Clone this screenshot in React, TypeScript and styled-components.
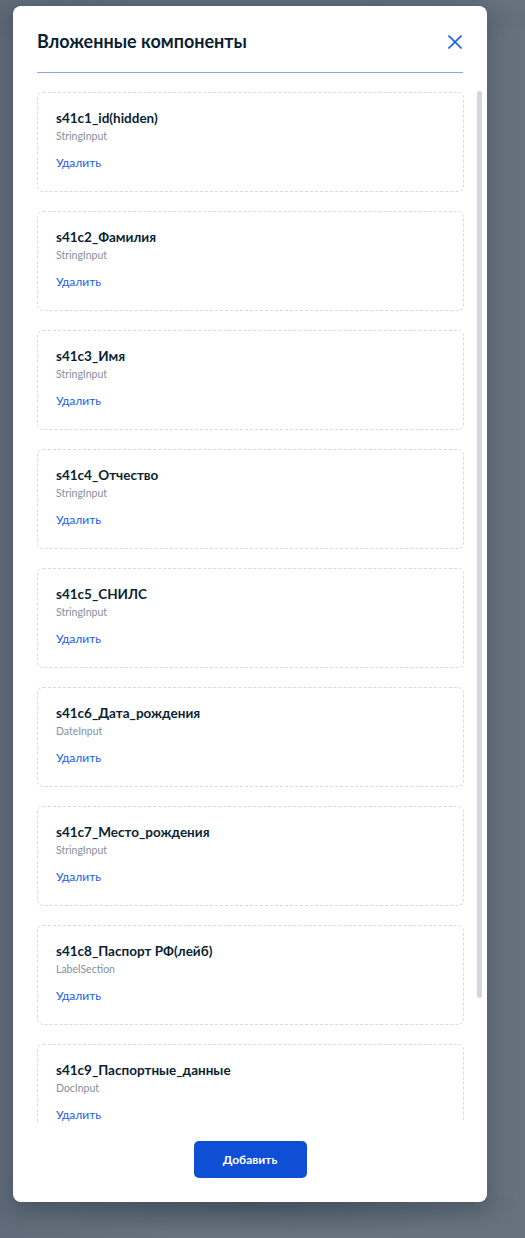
import React from "react";
import styled, { createGlobalStyle } from "styled-components";

const GlobalStyle = createGlobalStyle`
  html, body {
    margin: 0;
    padding: 0;
  }
  body {
    width: 525px;
    height: 1238px;
    overflow: hidden;
    font-family: Lato, "Noto Sans", sans-serif;
    background: #66727e;
  }
`;

const Page = styled.div`
  width: 525px;
  height: 1238px;
  box-sizing: border-box;
  padding: 6px 0 0 13px;
  background:
    radial-gradient(ellipse 300px 30px at 250px 20px, rgba(60, 72, 90, 0.45), transparent),
    radial-gradient(ellipse 280px 30px at 250px 1205px, rgba(60, 72, 90, 0.5), transparent),
    linear-gradient(90deg, #5f6b78 0%, #68747f 40%, #65717d 100%);
`;

const Modal = styled.div`
  width: 474px;
  height: 1196px;
  background: #ffffff;
  border-radius: 8px;
  box-shadow: 0 6px 24px rgba(30, 40, 55, 0.35);
  display: flex;
  flex-direction: column;
  box-sizing: border-box;
`;

const Header = styled.div`
  padding: 23px 24px 0 24px;
`;

const TitleRow = styled.div`
  display: flex;
  align-items: center;
  justify-content: space-between;
  height: 24px;
`;

const Title = styled.h2`
  margin: 0;
  font-family: Lato, "Noto Sans", sans-serif;
  font-weight: 700;
  font-size: 18px;
  line-height: 24px;
  color: #0b1f33;
`;

const CloseButton = styled.button`
  border: none;
  background: none;
  padding: 0;
  margin-right: 1px;
  margin-top: 1px;
  width: 14px;
  height: 14px;
  display: flex;
  cursor: pointer;
`;

const Divider = styled.div`
  margin-top: 19px;
  height: 1px;
  background: #8aa8e8;
`;

const BodyRow = styled.div`
  margin: 18px 5px 0 24px;
  flex: 1;
  min-height: 0;
  display: flex;
`;

const List = styled.div`
  flex: 1;
  min-width: 0;
  overflow: hidden;
  padding: 1px 13px 0 0;
  display: flex;
  flex-direction: column;
  gap: 19px;
`;

const ScrollTrack = styled.div`
  width: 5px;
  flex: none;
  display: flex;
  flex-direction: column;
`;

const ScrollThumb = styled.div<{ $ratio: number }>`
  height: ${(p) => p.$ratio * 100}%;
  background: #d3d6e1;
  border-radius: 3px;
`;

const Card = styled.div`
  flex: none;
  box-sizing: border-box;
  height: 100px;
  border: 1px dashed #cbdaf6;
  border-radius: 6px;
  padding: 16px 18px 0 18px;
  display: flex;
  flex-direction: column;
`;

const CardTitle = styled.div`
  font-weight: 700;
  font-size: 13.5px;
  line-height: 19px;
  color: #0b1f33;
  white-space: nowrap;
`;

const CardType = styled.div`
  font-size: 10.5px;
  line-height: 17px;
  color: #86909c;
`;

const DeleteLink = styled.a`
  margin-top: 10px;
  font-size: 12px;
  line-height: 16px;
  color: #1d5deb;
  text-decoration: none;
  cursor: pointer;
  align-self: flex-start;
`;

const Footer = styled.div`
  padding: 19px 0 24px;
  display: flex;
  justify-content: center;
`;

const AddButton = styled.button`
  width: 113px;
  height: 37px;
  border: none;
  border-radius: 5px;
  background: #0e4fd6;
  color: #ffffff;
  font-family: Lato, "Noto Sans", sans-serif;
  font-weight: 700;
  font-size: 12px;
  cursor: pointer;
`;

const items = [
  { name: "s41c1_id(hidden)", type: "StringInput" },
  { name: "s41c2_Фамилия", type: "StringInput" },
  { name: "s41c3_Имя", type: "StringInput" },
  { name: "s41c4_Отчество", type: "StringInput" },
  { name: "s41c5_СНИЛС", type: "StringInput" },
  { name: "s41c6_Дата_рождения", type: "DateInput" },
  { name: "s41c7_Место_рождения", type: "StringInput" },
  { name: "s41c8_Паспорт РФ(лейб)", type: "LabelSection" },
  { name: "s41c9_Паспортные_данные", type: "DocInput" },
];

// the full list holds 10 entries (100px cards, 19px gaps); visible area is 1031px
const TOTAL_ITEMS = 10;
const contentHeight = TOTAL_ITEMS * 100 + (TOTAL_ITEMS - 1) * 19 + 1;
const viewHeight = 1031;

export default function App() {
  return (
    <>
      <GlobalStyle />
      <Page>
        <Modal>
          <Header>
            <TitleRow>
              <Title>Вложенные компоненты</Title>
              <CloseButton aria-label="Закрыть">
                <svg width="14" height="14" viewBox="0 0 14 14">
                  <path d="M0.5 0.5 L13.5 13.5 M13.5 0.5 L0.5 13.5" stroke="#1d5deb" strokeWidth="1.6" fill="none" />
                </svg>
              </CloseButton>
            </TitleRow>
            <Divider />
          </Header>
          <BodyRow>
            <List>
              {items.map((it) => (
                <Card key={it.name}>
                  <CardTitle>{it.name}</CardTitle>
                  <CardType>{it.type}</CardType>
                  <DeleteLink>Удалить</DeleteLink>
                </Card>
              ))}
            </List>
            <ScrollTrack>
              <ScrollThumb $ratio={viewHeight / contentHeight} />
            </ScrollTrack>
          </BodyRow>
          <Footer>
            <AddButton>Добавить</AddButton>
          </Footer>
        </Modal>
      </Page>
    </>
  );
}
